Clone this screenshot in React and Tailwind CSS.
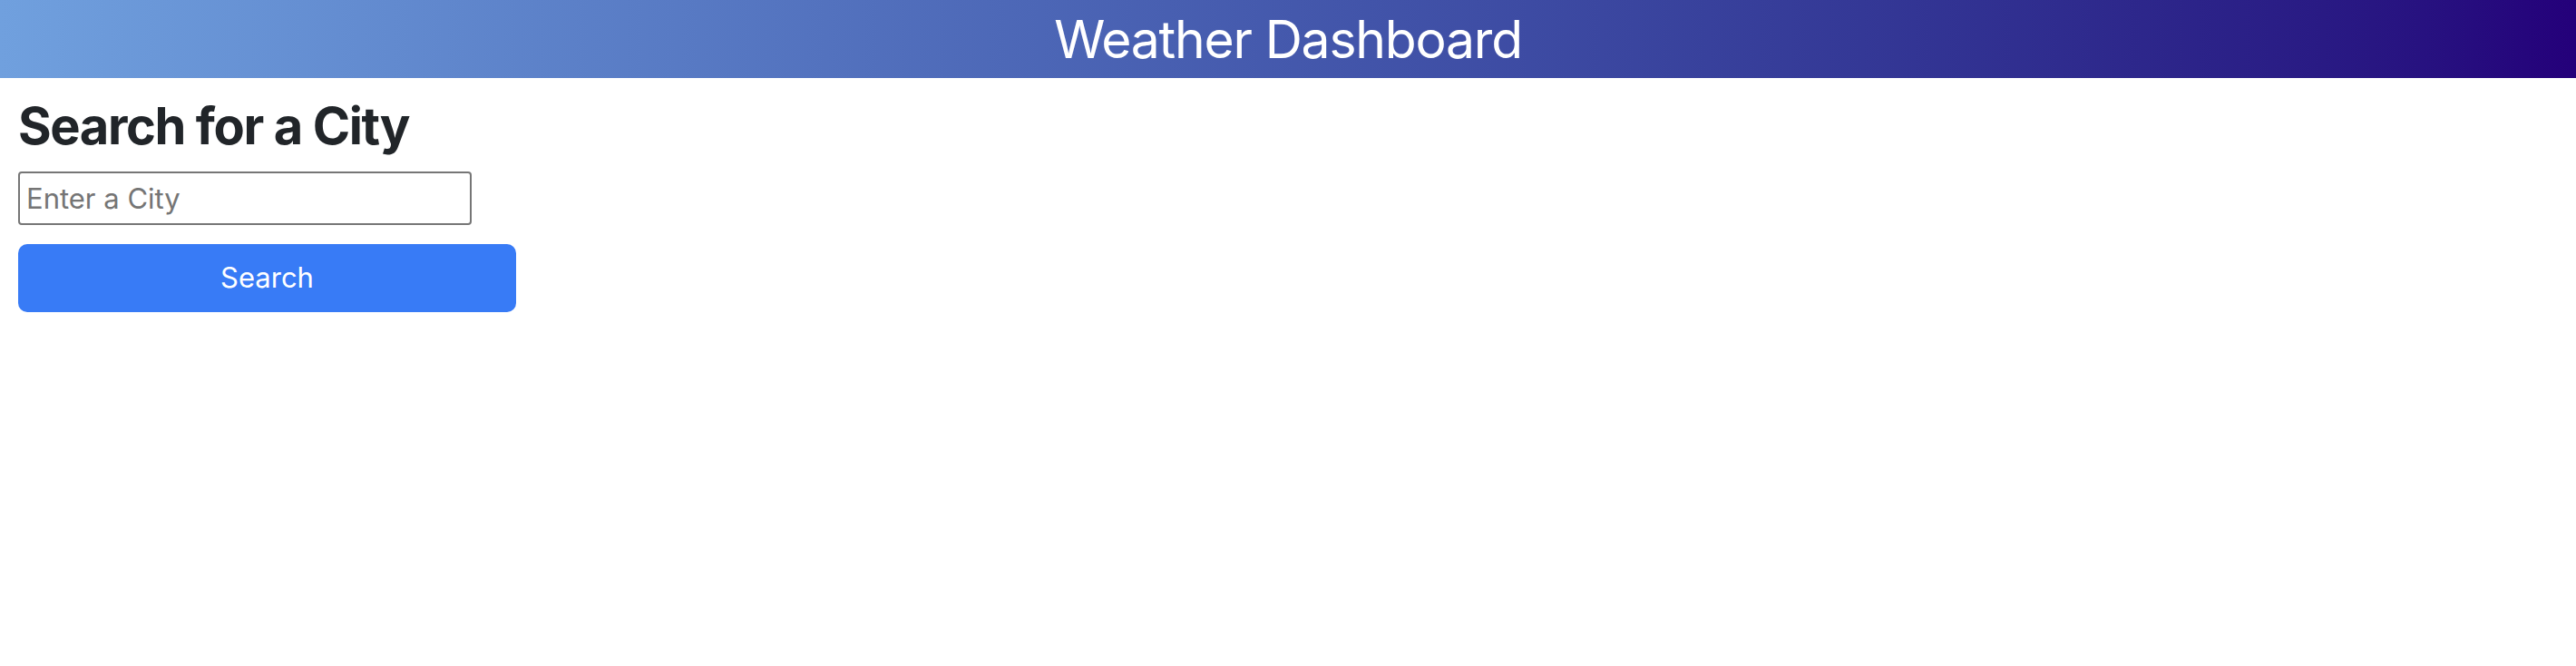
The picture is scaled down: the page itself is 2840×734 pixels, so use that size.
export default function App() {
  return (
    <div className="min-h-screen bg-white" style={{ fontFamily: "Inter, 'Noto Sans', sans-serif" }}>
      <header className="flex h-[86px] items-center justify-center bg-gradient-to-r from-[#70a0de] to-[#24007a]">
        <h1 className="text-[57px] font-normal leading-none tracking-[-1.2px] text-white">Weather Dashboard</h1>
      </header>
      <main className="px-[20px] pt-[20px]">
        <h3 className="mb-[16px] text-[56px] font-bold leading-[1.2] tracking-[-1.4px] text-[#212529]">Search for a City</h3>
        <form className="flex flex-col items-start" onSubmit={(e) => e.preventDefault()}>
          <input
            type="text"
            placeholder="Enter a City"
            className="h-[59px] w-[500px] rounded-[4px] border-2 border-[#767676] px-[7px] text-[31px] text-[#212529] placeholder:text-[#757575]"
          />
          <button
            type="submit"
            className="mt-[21px] h-[75px] w-[549px] rounded-[10px] bg-[#387bf6] text-[31px] text-white"
          >
            Search
          </button>
        </form>
      </main>
    </div>
  );
}
